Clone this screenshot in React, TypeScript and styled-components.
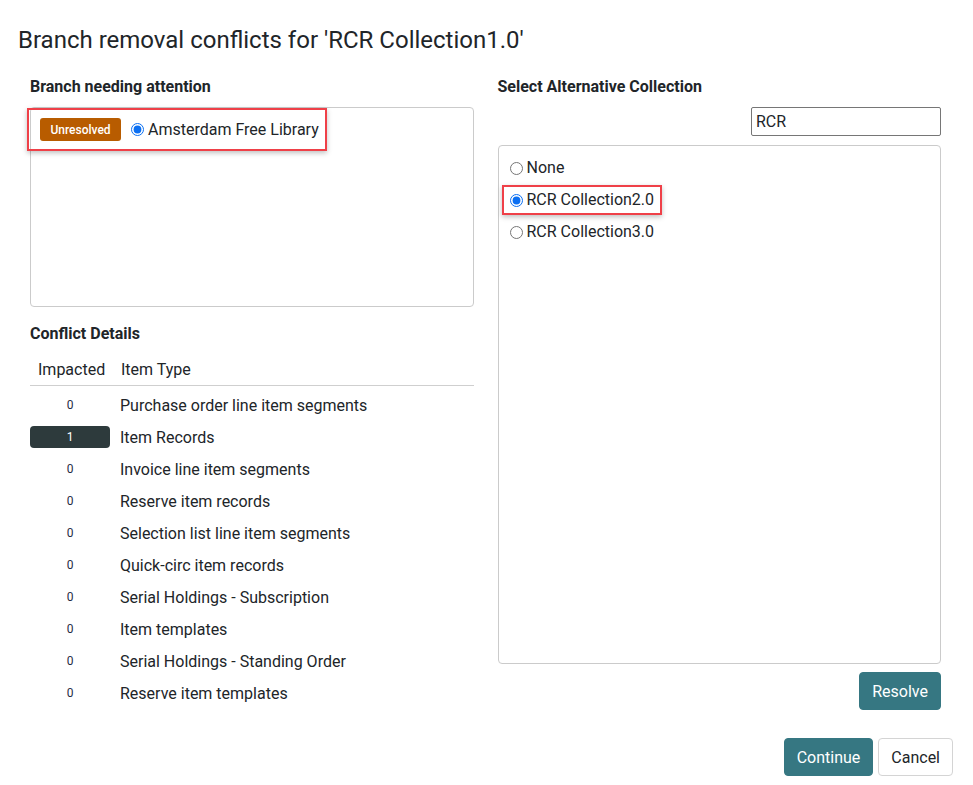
import styled, { createGlobalStyle } from "styled-components";

const Global = createGlobalStyle`
  body {
    margin: 0;
    background: #fff;
    color: #212529;
    font-family: Roboto, "Liberation Sans", sans-serif;
  }
  * { box-sizing: border-box; }
`;

const Page = styled.div`
  width: 973px;
  padding: 26px 20px 8px 18px;
`;

const Title = styled.h1`
  margin: 0;
  font-size: 24px;
  font-weight: 400;
  line-height: 29px;
  color: #212529;
`;

const Body = styled.div`
  display: grid;
  grid-template-columns: 1fr 1fr;
  gap: 24px;
  padding: 0 12px;
  margin-top: 23px;
`;

const Column = styled.div`
  display: flex;
  flex-direction: column;
`;

const Heading = styled.h2<{ $top?: number; $bottom?: number }>`
  margin: ${(p) => p.$top ?? 0}px 0 ${(p) => p.$bottom ?? 11}px;
  font-size: 16px;
  font-weight: 700;
  line-height: 18px;
`;

const Panel = styled.div<{ $height: number }>`
  height: ${(p) => p.$height}px;
  border: 1px solid #cbcbcb;
  border-radius: 4px;
  background: #fff;
`;

const Highlight = styled.div<{ $pad: string; $shift: number }>`
  display: inline-flex;
  align-items: center;
  gap: 10px;
  margin-left: ${(p) => p.$shift}px;
  padding: ${(p) => p.$pad};
  border: 2px solid #ef4048;
  box-shadow: 0 2px 5px rgba(0, 0, 0, 0.25);
`;

const Badge = styled.span`
  display: inline-flex;
  align-items: center;
  justify-content: center;
  width: 81px;
  height: 23px;
  border-radius: 3px;
  background: #b85c00;
  color: #fff;
  font-size: 12px;
  font-weight: 500;
`;

const RadioLabel = styled.label<{ $height?: number }>`
  display: inline-flex;
  align-items: center;
  gap: 4px;
  height: ${(p) => (p.$height ? `${p.$height}px` : "auto")};
  font-size: 16px;
  line-height: 20px;

  input {
    width: 13px;
    height: 13px;
    margin: 0;
    accent-color: #0b6ff2;
  }
`;

const SearchRow = styled.div`
  display: flex;
  justify-content: flex-end;
  margin-bottom: 9px;
`;

const Search = styled.input`
  width: 190px;
  height: 29px;
  padding: 0 4px;
  border: 1px solid #767676;
  border-radius: 2px;
  font-family: inherit;
  font-size: 16px;
  color: #212529;
  outline: none;
`;

const OptionList = styled(Panel)`
  padding: 6px 0 0 11px;
`;

const Option = styled.div`
  display: flex;
  align-items: center;
  height: 32px;
`;

const Actions = styled.div<{ $top: number }>`
  display: flex;
  justify-content: flex-end;
  gap: 5px;
  margin-top: ${(p) => p.$top}px;
`;

const Button = styled.button<{ $primary?: boolean }>`
  height: 38px;
  padding: 0 12px;
  border-radius: 4px;
  border: 1px solid ${(p) => (p.$primary ? "#367782" : "#d4d4d4")};
  background: ${(p) => (p.$primary ? "#367782" : "#fff")};
  color: ${(p) => (p.$primary ? "#fff" : "#212529")};
  font-family: inherit;
  font-size: 16px;
  cursor: pointer;
`;

const Table = styled.div`
  display: flex;
  flex-direction: column;
`;

const HeaderRow = styled.div`
  display: grid;
  grid-template-columns: 80px 1fr;
  align-items: center;
  height: 33px;
  border-bottom: 1px solid #cfcfcf;
  font-size: 16px;

  span:first-child { padding-left: 8px; }
  span:last-child { padding-left: 11px; }
`;

const Rows = styled.div`
  margin-top: 3px;
`;

const Row = styled.div`
  display: grid;
  grid-template-columns: 80px 1fr;
  align-items: center;
  height: 32px;
  font-size: 16px;
`;

const Count = styled.span<{ $hot?: boolean }>`
  display: flex;
  align-items: center;
  justify-content: center;
  height: 22px;
  border-radius: 4px;
  font-size: 12px;
  font-weight: 400;
  background: ${(p) => (p.$hot ? "#2d3a3c" : "transparent")};
  color: ${(p) => (p.$hot ? "#fff" : "#1f2b45")};
`;

const ItemName = styled.span`
  padding-left: 10px;
`;

const conflicts = [
  { count: 0, type: "Purchase order line item segments" },
  { count: 1, type: "Item Records" },
  { count: 0, type: "Invoice line item segments" },
  { count: 0, type: "Reserve item records" },
  { count: 0, type: "Selection list line item segments" },
  { count: 0, type: "Quick-circ item records" },
  { count: 0, type: "Serial Holdings - Subscription" },
  { count: 0, type: "Item templates" },
  { count: 0, type: "Serial Holdings - Standing Order" },
  { count: 0, type: "Reserve item templates" },
];

const collections = ["None", "RCR Collection2.0", "RCR Collection3.0"];

export default function App() {
  return (
    <Page>
      <Global />
      <Title>Branch removal conflicts for 'RCR Collection1.0'</Title>
      <Body>
        <Column>
          <Heading>Branch needing attention</Heading>
          <Panel $height={200}>
            <Highlight $pad="8px 6px 8px 11px" $shift={-4}>
              <Badge>Unresolved</Badge>
              <RadioLabel>
                <input type="radio" name="branch" defaultChecked />
                Amsterdam Free Library
              </RadioLabel>
            </Highlight>
          </Panel>

          <Heading $top={18} $bottom={10}>
            Conflict Details
          </Heading>
          <Table>
            <HeaderRow>
              <span>Impacted</span>
              <span>Item Type</span>
            </HeaderRow>
            <Rows>
              {conflicts.map((c, i) => (
                <Row key={i}>
                  <Count $hot={c.count > 0}>{c.count}</Count>
                  <ItemName>{c.type}</ItemName>
                </Row>
              ))}
            </Rows>
          </Table>
        </Column>

        <Column>
          <Heading>Select Alternative Collection</Heading>
          <SearchRow>
            <Search defaultValue="RCR" />
          </SearchRow>
          <OptionList $height={519}>
            {collections.map((name, i) => (
              <Option key={name}>
                {i === 1 ? (
                  <Highlight $pad="0 6px 0 6px" $shift={-8}>
                    <RadioLabel $height={26}>
                      <input type="radio" name="collection" defaultChecked />
                      {name}
                    </RadioLabel>
                  </Highlight>
                ) : (
                  <RadioLabel>
                    <input type="radio" name="collection" />
                    {name}
                  </RadioLabel>
                )}
              </Option>
            ))}
          </OptionList>
          <Actions $top={8}>
            <Button $primary>Resolve</Button>
          </Actions>
        </Column>
      </Body>
      <Actions $top={28}>
        <Button $primary>Continue</Button>
        <Button>Cancel</Button>
      </Actions>
    </Page>
  );
}
